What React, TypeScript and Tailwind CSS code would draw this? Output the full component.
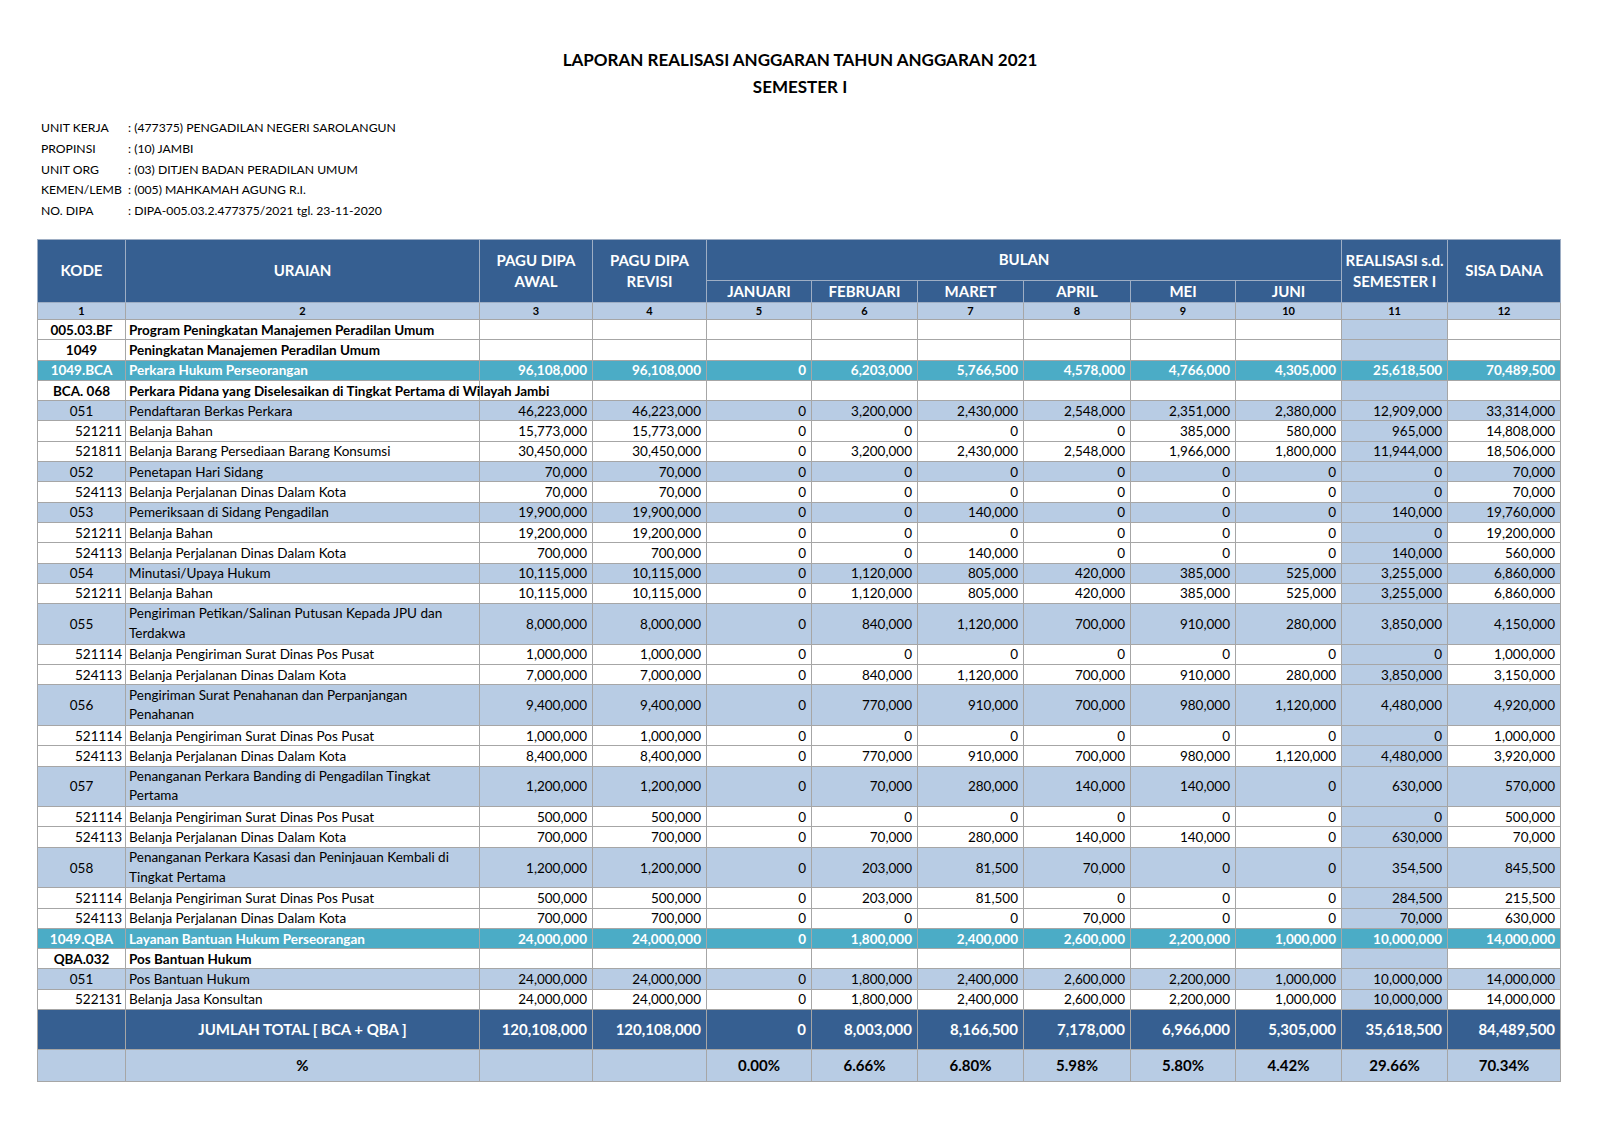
import React from 'react';

type RowType = 'head' | 'teal' | 'blue' | 'item';

interface ReportRow {
  kode: string;
  uraian: string[];
  type: RowType;
  values?: string[];
}

const rows: ReportRow[] = [
  { kode: '005.03.BF', uraian: ['Program Peningkatan Manajemen Peradilan Umum'], type: 'head' },
  { kode: '1049', uraian: ['Peningkatan Manajemen Peradilan Umum'], type: 'head' },
  { kode: '1049.BCA', uraian: ['Perkara Hukum Perseorangan'], type: 'teal', values: ['96,108,000', '96,108,000', '0', '6,203,000', '5,766,500', '4,578,000', '4,766,000', '4,305,000', '25,618,500', '70,489,500'] },
  { kode: 'BCA. 068', uraian: ['Perkara Pidana yang Diselesaikan di Tingkat Pertama di Wilayah Jambi'], type: 'head' },
  { kode: '051', uraian: ['Pendaftaran Berkas Perkara'], type: 'blue', values: ['46,223,000', '46,223,000', '0', '3,200,000', '2,430,000', '2,548,000', '2,351,000', '2,380,000', '12,909,000', '33,314,000'] },
  { kode: '521211', uraian: ['Belanja Bahan'], type: 'item', values: ['15,773,000', '15,773,000', '0', '0', '0', '0', '385,000', '580,000', '965,000', '14,808,000'] },
  { kode: '521811', uraian: ['Belanja Barang Persediaan Barang Konsumsi'], type: 'item', values: ['30,450,000', '30,450,000', '0', '3,200,000', '2,430,000', '2,548,000', '1,966,000', '1,800,000', '11,944,000', '18,506,000'] },
  { kode: '052', uraian: ['Penetapan Hari Sidang'], type: 'blue', values: ['70,000', '70,000', '0', '0', '0', '0', '0', '0', '0', '70,000'] },
  { kode: '524113', uraian: ['Belanja Perjalanan Dinas Dalam Kota'], type: 'item', values: ['70,000', '70,000', '0', '0', '0', '0', '0', '0', '0', '70,000'] },
  { kode: '053', uraian: ['Pemeriksaan di Sidang Pengadilan'], type: 'blue', values: ['19,900,000', '19,900,000', '0', '0', '140,000', '0', '0', '0', '140,000', '19,760,000'] },
  { kode: '521211', uraian: ['Belanja Bahan'], type: 'item', values: ['19,200,000', '19,200,000', '0', '0', '0', '0', '0', '0', '0', '19,200,000'] },
  { kode: '524113', uraian: ['Belanja Perjalanan Dinas Dalam Kota'], type: 'item', values: ['700,000', '700,000', '0', '0', '140,000', '0', '0', '0', '140,000', '560,000'] },
  { kode: '054', uraian: ['Minutasi/Upaya Hukum'], type: 'blue', values: ['10,115,000', '10,115,000', '0', '1,120,000', '805,000', '420,000', '385,000', '525,000', '3,255,000', '6,860,000'] },
  { kode: '521211', uraian: ['Belanja Bahan'], type: 'item', values: ['10,115,000', '10,115,000', '0', '1,120,000', '805,000', '420,000', '385,000', '525,000', '3,255,000', '6,860,000'] },
  { kode: '055', uraian: ['Pengiriman Petikan/Salinan Putusan Kepada JPU dan', 'Terdakwa'], type: 'blue', values: ['8,000,000', '8,000,000', '0', '840,000', '1,120,000', '700,000', '910,000', '280,000', '3,850,000', '4,150,000'] },
  { kode: '521114', uraian: ['Belanja Pengiriman Surat Dinas Pos Pusat'], type: 'item', values: ['1,000,000', '1,000,000', '0', '0', '0', '0', '0', '0', '0', '1,000,000'] },
  { kode: '524113', uraian: ['Belanja Perjalanan Dinas Dalam Kota'], type: 'item', values: ['7,000,000', '7,000,000', '0', '840,000', '1,120,000', '700,000', '910,000', '280,000', '3,850,000', '3,150,000'] },
  { kode: '056', uraian: ['Pengiriman Surat Penahanan dan Perpanjangan', 'Penahanan'], type: 'blue', values: ['9,400,000', '9,400,000', '0', '770,000', '910,000', '700,000', '980,000', '1,120,000', '4,480,000', '4,920,000'] },
  { kode: '521114', uraian: ['Belanja Pengiriman Surat Dinas Pos Pusat'], type: 'item', values: ['1,000,000', '1,000,000', '0', '0', '0', '0', '0', '0', '0', '1,000,000'] },
  { kode: '524113', uraian: ['Belanja Perjalanan Dinas Dalam Kota'], type: 'item', values: ['8,400,000', '8,400,000', '0', '770,000', '910,000', '700,000', '980,000', '1,120,000', '4,480,000', '3,920,000'] },
  { kode: '057', uraian: ['Penanganan Perkara Banding di Pengadilan Tingkat', 'Pertama'], type: 'blue', values: ['1,200,000', '1,200,000', '0', '70,000', '280,000', '140,000', '140,000', '0', '630,000', '570,000'] },
  { kode: '521114', uraian: ['Belanja Pengiriman Surat Dinas Pos Pusat'], type: 'item', values: ['500,000', '500,000', '0', '0', '0', '0', '0', '0', '0', '500,000'] },
  { kode: '524113', uraian: ['Belanja Perjalanan Dinas Dalam Kota'], type: 'item', values: ['700,000', '700,000', '0', '70,000', '280,000', '140,000', '140,000', '0', '630,000', '70,000'] },
  { kode: '058', uraian: ['Penanganan Perkara Kasasi dan Peninjauan Kembali di', 'Tingkat Pertama'], type: 'blue', values: ['1,200,000', '1,200,000', '0', '203,000', '81,500', '70,000', '0', '0', '354,500', '845,500'] },
  { kode: '521114', uraian: ['Belanja Pengiriman Surat Dinas Pos Pusat'], type: 'item', values: ['500,000', '500,000', '0', '203,000', '81,500', '0', '0', '0', '284,500', '215,500'] },
  { kode: '524113', uraian: ['Belanja Perjalanan Dinas Dalam Kota'], type: 'item', values: ['700,000', '700,000', '0', '0', '0', '70,000', '0', '0', '70,000', '630,000'] },
  { kode: '1049.QBA', uraian: ['Layanan Bantuan Hukum Perseorangan'], type: 'teal', values: ['24,000,000', '24,000,000', '0', '1,800,000', '2,400,000', '2,600,000', '2,200,000', '1,000,000', '10,000,000', '14,000,000'] },
  { kode: 'QBA.032', uraian: ['Pos Bantuan Hukum'], type: 'head' },
  { kode: '051', uraian: ['Pos Bantuan Hukum'], type: 'blue', values: ['24,000,000', '24,000,000', '0', '1,800,000', '2,400,000', '2,600,000', '2,200,000', '1,000,000', '10,000,000', '14,000,000'] },
  { kode: '522131', uraian: ['Belanja Jasa Konsultan'], type: 'item', values: ['24,000,000', '24,000,000', '0', '1,800,000', '2,400,000', '2,600,000', '2,200,000', '1,000,000', '10,000,000', '14,000,000'] },
];

const totals = ['120,108,000', '120,108,000', '0', '8,003,000', '8,166,500', '7,178,000', '6,966,000', '5,305,000', '35,618,500', '84,489,500'];
const percents = ['', '', '0.00%', '6.66%', '6.80%', '5.98%', '5.80%', '4.42%', '29.66%', '70.34%'];

const info = [
  ['UNIT KERJA', ': (477375) PENGADILAN NEGERI SAROLANGUN'],
  ['PROPINSI', ': (10) JAMBI'],
  ['UNIT ORG', ': (03) DITJEN BADAN PERADILAN UMUM'],
  ['KEMEN/LEMB', ': (005) MAHKAMAH AGUNG R.I.'],
  ['NO. DIPA', ': DIPA-005.03.2.477375/2021 tgl. 23-11-2020'],
];

const colWidths = ['w-[88px]', 'w-[354px]', 'w-[113px]', 'w-[114px]', 'w-[105px]', 'w-[106px]', 'w-[106px]', 'w-[107px]', 'w-[105px]', 'w-[106px]', 'w-[106px]', 'w-[113px]'];
const months = ['JANUARI', 'FEBRUARI', 'MARET', 'APRIL', 'MEI', 'JUNI'];

const cell = 'border border-[#a6a6a6] p-0 leading-[18px]';
const headCell = 'border border-[#9eaec4] p-0 bg-[#365f91] text-white font-bold text-[15px] leading-[21px] text-center align-middle';

const DataRow: React.FC<{ row: ReportRow }> = ({ row }) => {
  const double = row.uraian.length > 1;
  const rowBg =
    row.type === 'teal' ? 'bg-[#4bacc6] text-white font-bold' : row.type === 'blue' ? 'bg-[#b8cce4] text-black' : 'bg-white text-black';
  const kodeAlign =
    row.type === 'item' ? 'text-right pr-[3px]' : row.type === 'blue' ? 'text-center' : 'text-center font-bold';
  const values = row.values || Array(10).fill('');

  return (
    <tr className={`${rowBg} ${double ? 'h-[40.6px]' : 'h-[20.3px]'}`}>
      <td className={`${cell} ${kodeAlign} align-middle`}>{row.kode}</td>
      <td className={`${cell} pl-[3px] align-middle whitespace-nowrap ${row.type === 'head' ? 'font-bold' : ''}`}>
        {row.uraian.map((line, i) => (
          <div key={i} className={double ? 'leading-[19.5px]' : 'leading-[18px]'}>{line}</div>
        ))}
      </td>
      {values.map((v, i) => (
        <td
          key={i}
          className={`${cell} text-right pr-[5px] align-middle ${i === 8 && row.type !== 'teal' ? 'bg-[#b8cce4]' : ''}`}
        >
          {v}
        </td>
      ))}
    </tr>
  );
};

export default function App() {
  return (
    <div className="w-[1600px] min-h-[1131px] bg-white text-black font-['Lato',sans-serif]">
      <div className="pt-[46px] text-center font-bold text-[17px] leading-[27px]">
        <div>LAPORAN REALISASI ANGGARAN TAHUN ANGGARAN 2021</div>
        <div>SEMESTER I</div>
      </div>

      <div className="mt-[18px] pl-[41px] text-[12.2px] leading-[20.8px]">
        {info.map(([label, value]) => (
          <div key={label} className="flex">
            <span className="w-[87px] shrink-0">{label}</span>
            <span>{value}</span>
          </div>
        ))}
      </div>

      <table className="mt-[17px] ml-[37px] w-[1523px] table-fixed border-collapse text-[13.5px]">
        <colgroup>
          {colWidths.map((w, i) => (
            <col key={i} className={w} />
          ))}
        </colgroup>
        <thead>
          <tr className="h-[41px]">
            <th rowSpan={2} className={headCell}>KODE</th>
            <th rowSpan={2} className={headCell}>URAIAN</th>
            <th rowSpan={2} className={headCell}>PAGU DIPA<br />AWAL</th>
            <th rowSpan={2} className={headCell}>PAGU DIPA<br />REVISI</th>
            <th colSpan={6} className={headCell}>BULAN</th>
            <th rowSpan={2} className={headCell}>REALISASI s.d.<br />SEMESTER I</th>
            <th rowSpan={2} className={headCell}>SISA DANA</th>
          </tr>
          <tr className="h-[21px]">
            {months.map((m) => (
              <th key={m} className={headCell}>{m}</th>
            ))}
          </tr>
          <tr className="h-[17px] bg-[#b8cce4]">
            {Array.from({ length: 12 }, (_, i) => (
              <th key={i} className="border border-[#a6a6a6] p-0 text-center text-[11px] font-bold leading-[14px]">{i + 1}</th>
            ))}
          </tr>
        </thead>
        <tbody>
          {rows.map((row, i) => (
            <DataRow key={i} row={row} />
          ))}
          <tr className="h-[40px] bg-[#365f91] text-white font-bold text-[15px]">
            <td className="border border-[#a6a6a6]" />
            <td className="border border-[#a6a6a6] text-center align-middle">JUMLAH TOTAL [ BCA + QBA ]</td>
            {totals.map((v, i) => (
              <td key={i} className="border border-[#a6a6a6] text-right pr-[5px] align-middle">{v}</td>
            ))}
          </tr>
          <tr className="h-[32px] bg-[#b8cce4] font-bold text-[15px]">
            <td className="border border-[#a6a6a6]" />
            <td className="border border-[#a6a6a6] text-center align-middle">%</td>
            {percents.map((v, i) => (
              <td key={i} className="border border-[#a6a6a6] text-center align-middle">{v}</td>
            ))}
          </tr>
        </tbody>
      </table>
    </div>
  );
}
